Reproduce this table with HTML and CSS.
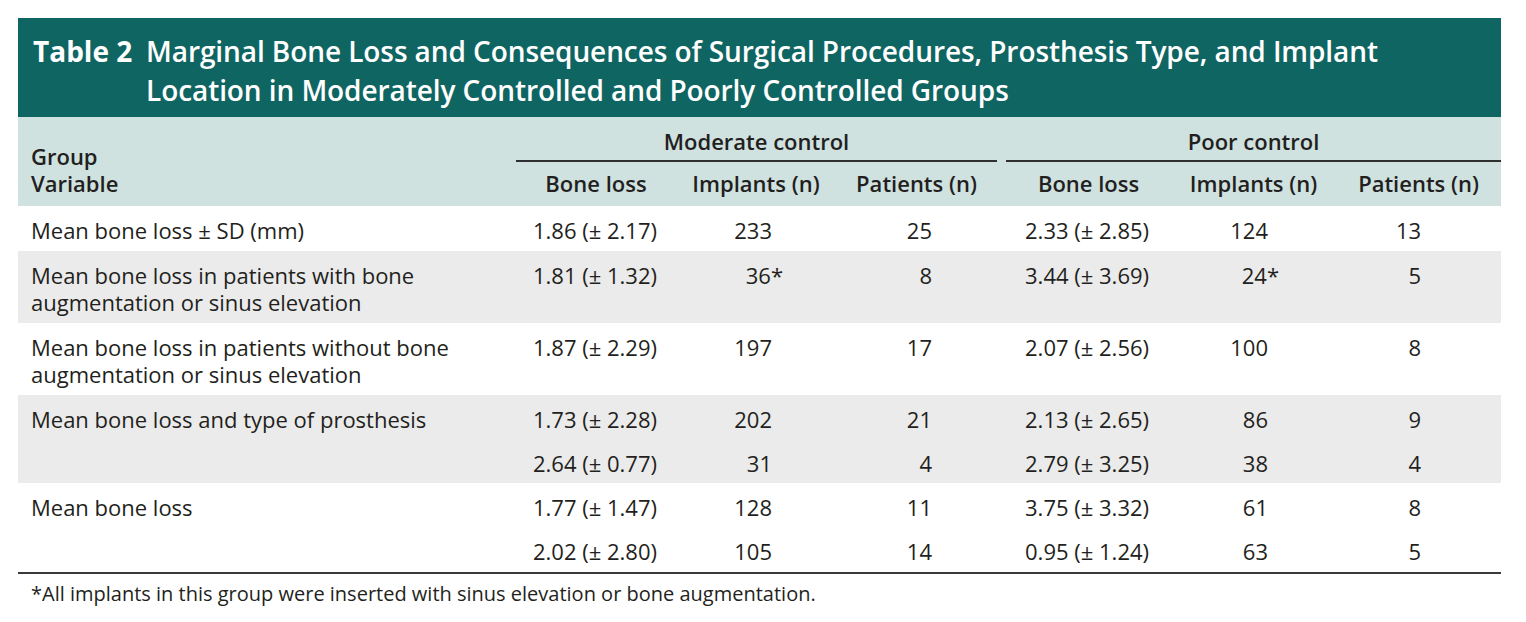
FILE: index.html
```html
<!DOCTYPE html>
<html lang="en">
<head>
<meta charset="utf-8">
<title>Table 2</title>
<link rel="stylesheet" href="styles.css">
</head>
<body>
<div class="wrap">
  <div class="caption">
    <div class="cap-label">Table 2</div>
    <div class="cap-title">Marginal Bone Loss and Consequences of Surgical Procedures, Prosthesis Type, and Implant Location in Moderately Controlled and Poorly Controlled Groups</div>
  </div>
  <table class="data">
    <colgroup>
      <col class="c-label">
      <col class="c-m"><col class="c-m"><col class="c-m2">
      <col class="c-gap">
      <col class="c-p"><col class="c-p"><col class="c-p">
    </colgroup>
    <thead>
      <tr class="h1">
        <th class="label-h" rowspan="2">Group<br>Variable</th>
        <th class="group" colspan="3">Moderate control</th>
        <th class="gap"></th>
        <th class="group" colspan="3">Poor control</th>
      </tr>
      <tr class="h2">
        <th>Bone loss</th>
        <th>Implants (n)</th>
        <th>Patients (n)</th>
        <th class="gap"></th>
        <th>Bone loss</th>
        <th>Implants (n)</th>
        <th>Patients (n)</th>
      </tr>
    </thead>
    <tbody>
      <tr class="row">
        <td class="lbl">Mean bone loss ± SD (mm)</td>
        <td class="bl-m">1.86 (± 2.17)</td><td class="im-m">233</td><td class="pt-m">25</td>
        <td class="gap"></td>
        <td class="bl-p">2.33 (± 2.85)</td><td class="im-p">124</td><td class="pt-p">13</td>
      </tr>
      <tr class="row shade">
        <td class="lbl">Mean bone loss in patients with bone<br>augmentation or sinus elevation</td>
        <td class="bl-m">1.81 (± 1.32)</td><td class="im-m">36<span class="ast">*</span></td><td class="pt-m">8</td>
        <td class="gap"></td>
        <td class="bl-p">3.44 (± 3.69)</td><td class="im-p">24<span class="ast">*</span></td><td class="pt-p">5</td>
      </tr>
      <tr class="row">
        <td class="lbl">Mean bone loss in patients without bone<br>augmentation or sinus elevation</td>
        <td class="bl-m">1.87 (± 2.29)</td><td class="im-m">197</td><td class="pt-m">17</td>
        <td class="gap"></td>
        <td class="bl-p">2.07 (± 2.56)</td><td class="im-p">100</td><td class="pt-p">8</td>
      </tr>
      <tr class="row shade sub">
        <td class="lbl">Mean bone loss and type of prosthesis</td>
        <td class="bl-m">1.73 (± 2.28)</td><td class="im-m">202</td><td class="pt-m">21</td>
        <td class="gap"></td>
        <td class="bl-p">2.13 (± 2.65)</td><td class="im-p">86</td><td class="pt-p">9</td>
      </tr>
      <tr class="row shade sub">
        <td class="lbl"></td>
        <td class="bl-m">2.64 (± 0.77)</td><td class="im-m">31</td><td class="pt-m">4</td>
        <td class="gap"></td>
        <td class="bl-p">2.79 (± 3.25)</td><td class="im-p">38</td><td class="pt-p">4</td>
      </tr>
      <tr class="row sub">
        <td class="lbl">Mean bone loss</td>
        <td class="bl-m">1.77 (± 1.47)</td><td class="im-m">128</td><td class="pt-m">11</td>
        <td class="gap"></td>
        <td class="bl-p">3.75 (± 3.32)</td><td class="im-p">61</td><td class="pt-p">8</td>
      </tr>
      <tr class="row last">
        <td class="lbl"></td>
        <td class="bl-m">2.02 (± 2.80)</td><td class="im-m">105</td><td class="pt-m">14</td>
        <td class="gap"></td>
        <td class="bl-p">0.95 (± 1.24)</td><td class="im-p">63</td><td class="pt-p">5</td>
      </tr>
    </tbody>
  </table>
  <p class="note">*All implants in this group were inserted with sinus elevation or bone augmentation.</p>
</div>
</body>
</html>
```

FILE: styles.css
```css
html, body {
  margin: 0;
  padding: 0;
  background: #ffffff;
}

body {
  font-family: "Open Sans", "Noto Sans", "Liberation Sans", sans-serif;
  color: #231f20;
}

.wrap {
  margin: 18px 0 0 18px;
  width: 1483px;
}

.caption {
  display: flex;
  background: #0f6562;
  color: #ffffff;
  padding: 14px 0 8px 15px;
  font-size: 28px;
  line-height: 38.5px;
}

.cap-label {
  font-weight: 700;
  flex: 0 0 auto;
  width: 113px;
}

.cap-title {
  font-weight: 600;
  width: 1250px;
  letter-spacing: -0.08px;
}

.data {
  width: 1483px;
  border-collapse: collapse;
  table-layout: fixed;
  font-size: 22px;
  line-height: 27px;
}

.c-label { width: 498px; }
.c-m { width: 160px; }
.c-m2 { width: 161px; }
.c-gap { width: 9px; }
.c-p { width: 165px; }

thead th {
  background: #cfe2e0;
  font-weight: 600;
  text-align: center;
  white-space: nowrap;
}

.h1 th {
  padding: 11px 0 5px 0;
}

.h1 th.group {
  border-bottom: 2px solid #2f2f2f;
}

.h2 th {
  padding: 8px 0 9px 0;
}

th.label-h {
  text-align: left;
  vertical-align: bottom;
  padding: 0 0 9px 13px;
}

td {
  padding: 11px 0 7px 0;
  vertical-align: top;
  white-space: nowrap;
}

.sub td {
  padding-bottom: 6px;
}

.shade td {
  background: #ebebeb;
}

.last td {
  border-bottom: 2px solid #3a3a3a;
}

td.lbl {
  padding-left: 13px;
}

td.bl-m { padding-left: 17px; }
td.bl-p { padding-left: 19px; }

td.im-m { text-align: right; padding-right: 64px; }
td.pt-m { text-align: right; padding-right: 65px; }
td.im-p { text-align: right; padding-right: 68px; }
td.pt-p { text-align: right; padding-right: 80px; }

.ast {
  margin-right: -0.5em;
}

.note {
  margin: 8px 0 0 13px;
  font-size: 20px;
  line-height: 24px;
}
```
